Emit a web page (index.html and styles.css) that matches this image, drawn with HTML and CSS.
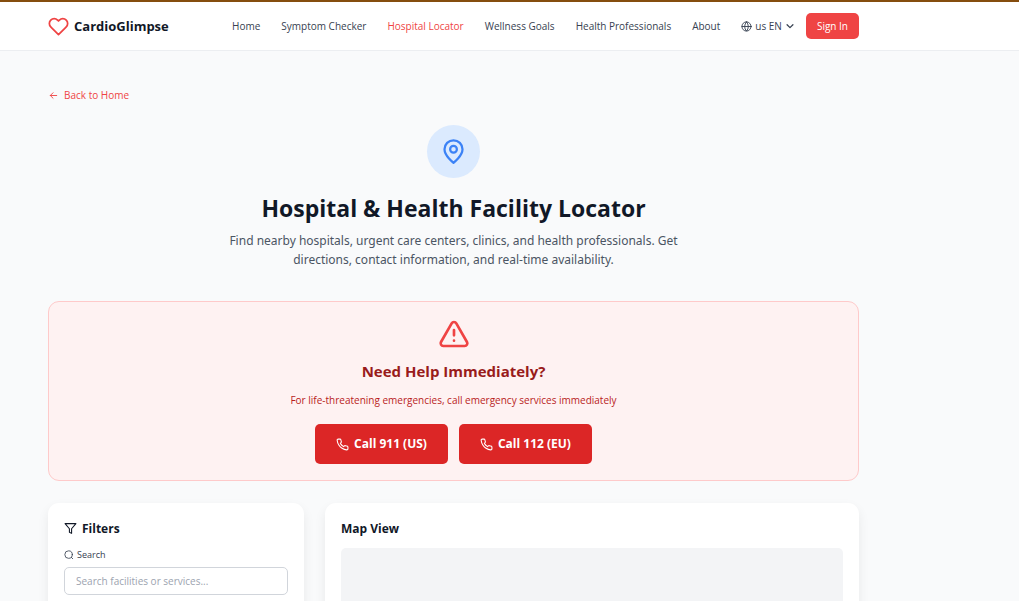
FILE: index.html
```html
<!DOCTYPE html>
<html lang="en">
<head>
  <meta charset="UTF-8" />
  <meta name="viewport" content="width=device-width, initial-scale=1.0"/>
  <title>CardioGlimpse | Hospital Locator</title>
  <link rel="stylesheet" href="styles.css">
</head>
<body>

  <header class="site-header">
    <a href="#" class="logo">
      <svg class="icon" width="21" height="21" viewBox="0 0 24 24"><path d="M20.84 4.61a5.5 5.5 0 0 0-7.78 0L12 5.67l-1.06-1.06a5.5 5.5 0 0 0-7.78 7.78l1.06 1.06L12 21.23l7.78-7.78 1.06-1.06a5.5 5.5 0 0 0 0-7.78z"/></svg>
      <span>CardioGlimpse</span>
    </a>
    <nav class="main-nav">
      <a href="#">Home</a>
      <a href="#">Symptom Checker</a>
      <a href="#" class="active">Hospital Locator</a>
      <a href="#">Wellness Goals</a>
      <a href="#">Health Professionals</a>
      <a href="#">About</a>
      <div class="nav-actions">
        <button type="button" class="lang-btn">
          <svg class="icon" width="11" height="11" viewBox="0 0 24 24"><circle cx="12" cy="12" r="10"/><path d="M2 12h20M12 2a15.3 15.3 0 0 1 4 10 15.3 15.3 0 0 1-4 10 15.3 15.3 0 0 1-4-10 15.3 15.3 0 0 1 4-10z"/></svg>
          <span>us EN</span>
          <svg class="icon chevron" width="10" height="10" viewBox="0 0 24 24"><path d="m5 9 7 7 7-7"/></svg>
        </button>
        <button type="button" class="signin-btn">Sign In</button>
      </div>
    </nav>
  </header>

  <main class="page">
    <a href="#" class="back-link">
      <svg class="icon" width="11" height="11" viewBox="0 0 24 24"><path d="M19 12H5M11 18l-6-6 6-6"/></svg>
      <span>Back to Home</span>
    </a>

    <section class="hero">
      <div class="hero-icon">
        <svg class="icon" width="27" height="27" viewBox="0 0 24 24"><path d="M20 10c0 6-8 12-8 12s-8-6-8-12a8 8 0 0 1 16 0z"/><circle cx="12" cy="10" r="3"/></svg>
      </div>
      <h1>Hospital &amp; Health Facility Locator</h1>
      <p>Find nearby hospitals, urgent care centers, clinics, and health professionals. Get directions, contact information, and real-time availability.</p>
    </section>

    <section class="emergency">
      <svg class="icon" width="32" height="32" viewBox="0 0 24 24"><path d="m21.73 18-8-14a2 2 0 0 0-3.48 0l-8 14A2 2 0 0 0 4 21h16a2 2 0 0 0 1.73-3z"/><path d="M12 9v4M12 17h.01"/></svg>
      <h2>Need Help Immediately?</h2>
      <p>For life-threatening emergencies, call emergency services immediately</p>
      <div class="call-row">
        <a href="tel:911" class="call-btn">
          <svg class="icon" width="13" height="13" viewBox="0 0 24 24"><path d="M22 16.92v3a2 2 0 0 1-2.18 2 19.79 19.79 0 0 1-8.63-3.07 19.5 19.5 0 0 1-6-6 19.79 19.79 0 0 1-3.07-8.67A2 2 0 0 1 4.11 2h3a2 2 0 0 1 2 1.72c.13.96.36 1.9.7 2.81a2 2 0 0 1-.45 2.11L8.09 9.91a16 16 0 0 0 6 6l1.27-1.27a2 2 0 0 1 2.11-.45c.91.34 1.85.57 2.81.7A2 2 0 0 1 22 16.92z"/></svg>
          Call 911 (US)
        </a>
        <a href="tel:112" class="call-btn">
          <svg class="icon" width="13" height="13" viewBox="0 0 24 24"><path d="M22 16.92v3a2 2 0 0 1-2.18 2 19.79 19.79 0 0 1-8.63-3.07 19.5 19.5 0 0 1-6-6 19.79 19.79 0 0 1-3.07-8.67A2 2 0 0 1 4.11 2h3a2 2 0 0 1 2 1.72c.13.96.36 1.9.7 2.81a2 2 0 0 1-.45 2.11L8.09 9.91a16 16 0 0 0 6 6l1.27-1.27a2 2 0 0 1 2.11-.45c.91.34 1.85.57 2.81.7A2 2 0 0 1 22 16.92z"/></svg>
          Call 112 (EU)
        </a>
      </div>
    </section>

    <div class="results">
      <aside class="card">
        <h3>
          <svg class="icon" width="13" height="13" viewBox="0 0 24 24"><path d="M22 3H2l8 9.46V19l4 2v-8.54L22 3z"/></svg>
          Filters
        </h3>
        <label for="search" class="field-label">
          <svg class="icon" width="10" height="10" viewBox="0 0 24 24"><circle cx="11" cy="11" r="9"/><path d="m21 21-3.5-3.5"/></svg>
          Search
        </label>
        <input type="text" id="search" class="search-input" placeholder="Search facilities or services..." />
      </aside>

      <section class="card">
        <h3>Map View</h3>
        <div class="map"></div>
      </section>
    </div>
  </main>

</body>
</html>
```
FILE: styles.css
```css
* {
  margin: 0;
  padding: 0;
  box-sizing: border-box;
}

body {
  min-height: 100vh;
  border-top: 2px solid #854d0e;
  background: #f9fafb;
  color: #111827;
  font-family: 'Segoe UI', 'Open Sans', sans-serif;
  font-size: 10px;
  line-height: 16px;
}

a {
  color: inherit;
  text-decoration: none;
}

button,
input {
  font: inherit;
}

.icon {
  flex: none;
  fill: none;
  stroke: currentColor;
  stroke-width: 2;
  stroke-linecap: round;
  stroke-linejoin: round;
}

/* header */
.site-header {
  display: flex;
  justify-content: space-between;
  align-items: center;
  height: 49px;
  padding: 0 160px 0 48px;
  background: #fff;
  border-bottom: 1px solid #eceef1;
}

.logo {
  display: flex;
  align-items: center;
  gap: 5px;
  font-size: 13px;
  font-weight: 700;
}

.logo .icon {
  color: #ef4444;
}

.main-nav {
  display: flex;
  align-items: center;
  gap: 21px;
  color: #374151;
  white-space: nowrap;
}

.main-nav .active {
  color: #ef4444;
}

.nav-actions {
  display: flex;
  align-items: center;
  gap: 11px;
}

.lang-btn {
  display: flex;
  align-items: center;
  gap: 3px;
  background: none;
  border: none;
  color: #374151;
  cursor: pointer;
}

.chevron {
  stroke-width: 3;
}

.signin-btn {
  height: 26px;
  padding: 0 11px;
  background: #ef4444;
  border: none;
  border-radius: 5px;
  color: #fff;
  cursor: pointer;
}

/* page */
.page {
  padding: 36px 160px 0 48px;
}

.back-link {
  display: flex;
  align-items: center;
  gap: 5px;
  width: fit-content;
  color: #ef4444;
}

.hero {
  display: flex;
  flex-direction: column;
  align-items: center;
  margin-top: 22px;
  text-align: center;
}

.hero-icon {
  display: flex;
  align-items: center;
  justify-content: center;
  width: 53px;
  height: 53px;
  border-radius: 50%;
  background: #dbeafe;
  color: #3b82f6;
}

.hero h1 {
  margin-top: 16px;
  font-size: 23px;
  line-height: 28px;
}

.hero p {
  max-width: 500px;
  margin-top: 9px;
  color: #4b5563;
  font-family: 'Segoe UI', 'Noto Sans', sans-serif;
  font-size: 12px;
  line-height: 19px;
}

.emergency {
  display: flex;
  flex-direction: column;
  align-items: center;
  margin-top: 32px;
  padding: 16px;
  background: #fef2f2;
  border: 1px solid #fecaca;
  border-radius: 11px;
  color: #b91c1c;
  text-align: center;
}

.emergency > .icon {
  color: #ef4444;
}

.emergency h2 {
  margin-top: 11px;
  color: #991b1b;
  font-size: 15px;
  line-height: 20px;
}

.emergency p {
  margin-top: 11px;
}

.call-row {
  display: flex;
  gap: 11px;
  margin-top: 16px;
}

.call-btn {
  display: flex;
  align-items: center;
  gap: 5px;
  height: 40px;
  padding: 0 21px;
  background: #dc2626;
  border-radius: 5px;
  color: #fff;
  font-size: 12px;
  font-weight: 700;
}

.results {
  display: grid;
  grid-template-columns: 256px 1fr;
  gap: 21px;
  margin-top: 22px;
}

.card {
  padding: 16px;
  background: #fff;
  border-radius: 11px;
  box-shadow: 0 5px 12px rgba(0, 0, 0, 0.07);
}

.card h3 {
  display: flex;
  align-items: center;
  gap: 5px;
  font-size: 12px;
  line-height: 19px;
}

.field-label {
  display: flex;
  align-items: center;
  gap: 3px;
  margin-top: 9px;
  color: #374151;
  font-size: 9px;
}

.search-input {
  width: 100%;
  height: 28px;
  margin-top: 4px;
  padding: 0 11px;
  border: 1px solid #d1d5db;
  border-radius: 5px;
  color: #111827;
}

.search-input::placeholder {
  color: #9ca3af;
}

.map {
  height: 267px;
  margin-top: 10px;
  background: #f3f4f6;
  border-radius: 5px;
}
```
